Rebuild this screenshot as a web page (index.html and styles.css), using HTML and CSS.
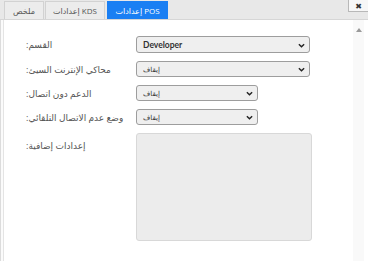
FILE: index.html
```html
<!DOCTYPE html>
<html>

<head>
	<meta charset="utf-8">
	<link rel="stylesheet" href="styles.css">
</head>

<body>
	<div class="topbar">
		<div class="tabs">
			<div class="tab">ملخص</div>
			<div class="tab">إعدادات KDS</div>
			<div class="tab active">إعدادات POS</div>
		</div>
		<div class="close">&#10006;</div>
	</div>
	<div class="main">
		<div class="edge"></div>
		<div class="content">
			<div class="form">
				<div class="label">:القسم</div>
				<div class="pick wide first">
					<select class="dev"><option>Developer</option></select>
					<svg class="chev" viewBox="0 0 8 5"><path d="M1 1 L4 4 L7 1"/></svg>
				</div>
				<div class="label">:محاكي الإنترنت السيئ</div>
				<div class="pick wide">
					<select><option>إيقاف</option></select>
					<svg class="chev" viewBox="0 0 8 5"><path d="M1 1 L4 4 L7 1"/></svg>
				</div>
				<div class="label">:الدعم دون اتصال</div>
				<div class="pick narrow">
					<select><option>إيقاف</option></select>
					<svg class="chev" viewBox="0 0 8 5"><path d="M1 1 L4 4 L7 1"/></svg>
				</div>
				<div class="label">:وضع عدم الاتصال التلقائي</div>
				<div class="pick narrow">
					<select><option>إيقاف</option></select>
					<svg class="chev" viewBox="0 0 8 5"><path d="M1 1 L4 4 L7 1"/></svg>
				</div>
				<div class="label top">:إعدادات إضافية</div>
				<textarea></textarea>
			</div>
		</div>
		<div class="scroll">
			<svg class="up" viewBox="0 0 6 4"><path d="M0 4 L3 0 L6 4 Z"/></svg>
		</div>
	</div>
</body>

</html>
```
FILE: styles.css
```css
body {
	margin: 0;
	width: 368px;
	height: 261px;
	overflow: hidden;
	background: #fff;
	font-family: "Open Sans", "DejaVu Sans", sans-serif;
	font-size: 9px;
	color: #444;
}
.topbar {
	height: 19px;
	background: #e8e8e8;
	border-bottom: 1px solid #d6d6d6;
	display: flex;
	justify-content: space-between;
	align-items: flex-start;
}
.tabs {
	display: flex;
	gap: 1px;
	padding: 1px 0 0 4px;
}
.tab {
	height: 18px;
	box-sizing: border-box;
	padding: 0 2px;
	display: flex;
	align-items: center;
	justify-content: center;
	white-space: nowrap;
	background: #ececec;
	border: 1px solid #d2d2d2;
	border-bottom: none;
	font-size: 8px;
	color: #555;
}
.tab:nth-child(1) { width: 40px; }
.tab:nth-child(2) { width: 60px; }
.tab.active {
	width: 61px;
	margin-left: 1px;
	background: #1a7ff3;
	border-color: #1a7ff3;
	color: #fff;
}
.close {
	width: 20px;
	height: 12px;
	box-sizing: border-box;
	background: #f7f7f7;
	border: 1px solid #b8b8b8;
	border-top: none;
	border-right: none;
	font-size: 8px;
	color: #333;
	display: flex;
	align-items: center;
	justify-content: center;
}
.main {
	display: flex;
	height: 241px;
}
.edge {
	width: 4px;
	border-left: 1px solid #dcdcdc;
	border-right: 1px solid #e4e4e4;
	box-sizing: border-box;
	background: #fbfbfb;
}
.content {
	flex: 1;
	padding: 16px 0 0 22px;
}
.form {
	display: grid;
	grid-template-columns: 110px auto;
	row-gap: 8px;
	align-items: center;
}
.label {
	justify-self: start;
	width: max-content;
	text-align: left;
	color: #555;
	font-size: 9px;
}
.label.top {
	align-self: start;
	margin-top: 6px;
}
.pick {
	position: relative;
	height: 16px;
}
.pick.first { height: 17px; }
.pick.wide { width: 174px; }
.pick.narrow { width: 122px; }
select {
	appearance: none;
	width: 100%;
	height: 100%;
	box-sizing: border-box;
	margin: 0;
	padding: 0 6px;
	background: #efefef;
	border: 1px solid #9d9d9d;
	border-radius: 3px;
	font-family: "Open Sans", "DejaVu Sans", sans-serif;
	font-size: 7px;
	color: #333;
}
select.dev {
	font-family: Lato, "Open Sans", sans-serif;
	font-size: 8.5px;
	font-weight: 700;
}
.chev {
	position: absolute;
	right: 5px;
	top: 50%;
	width: 7px;
	height: 5px;
	margin-top: -2px;
	fill: none;
	stroke: #222;
	stroke-width: 1.6;
}
textarea {
	width: 176px;
	height: 108px;
	box-sizing: border-box;
	margin: 0;
	background: #ececec;
	border: 1px solid #d8d8d8;
	border-radius: 3px;
	resize: none;
}
.scroll {
	width: 11px;
	margin-right: 4px;
	background: #f9f9f9;
	position: relative;
}
.up {
	position: absolute;
	left: 3px;
	top: 8px;
	width: 6px;
	height: 4px;
	fill: #9a9a9a;
}
```
